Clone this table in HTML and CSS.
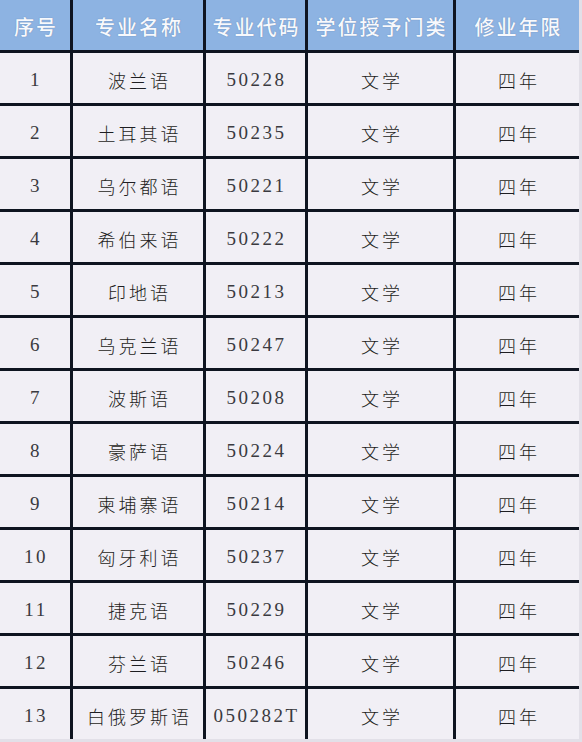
FILE: index.html
```html
<!DOCTYPE html>
<html lang="zh-CN">
<head>
<meta charset="utf-8">
<title>专业列表</title>
<link rel="stylesheet" href="styles.css">
</head>
<body>
<div class="sheet">
  <div class="grid">
    <div class="cell head">序号</div>
    <div class="cell head">专业名称</div>
    <div class="cell head">专业代码</div>
    <div class="cell head">学位授予门类</div>
    <div class="cell head">修业年限</div>

    <div class="cell num">1</div><div class="cell">波兰语</div><div class="cell num">50228</div><div class="cell">文学</div><div class="cell">四年</div>
    <div class="cell num">2</div><div class="cell">土耳其语</div><div class="cell num">50235</div><div class="cell">文学</div><div class="cell">四年</div>
    <div class="cell num">3</div><div class="cell">乌尔都语</div><div class="cell num">50221</div><div class="cell">文学</div><div class="cell">四年</div>
    <div class="cell num">4</div><div class="cell">希伯来语</div><div class="cell num">50222</div><div class="cell">文学</div><div class="cell">四年</div>
    <div class="cell num">5</div><div class="cell">印地语</div><div class="cell num">50213</div><div class="cell">文学</div><div class="cell">四年</div>
    <div class="cell num">6</div><div class="cell">乌克兰语</div><div class="cell num">50247</div><div class="cell">文学</div><div class="cell">四年</div>
    <div class="cell num">7</div><div class="cell">波斯语</div><div class="cell num">50208</div><div class="cell">文学</div><div class="cell">四年</div>
    <div class="cell num">8</div><div class="cell">豪萨语</div><div class="cell num">50224</div><div class="cell">文学</div><div class="cell">四年</div>
    <div class="cell num">9</div><div class="cell">柬埔寨语</div><div class="cell num">50214</div><div class="cell">文学</div><div class="cell">四年</div>
    <div class="cell num">10</div><div class="cell">匈牙利语</div><div class="cell num">50237</div><div class="cell">文学</div><div class="cell">四年</div>
    <div class="cell num">11</div><div class="cell">捷克语</div><div class="cell num">50229</div><div class="cell">文学</div><div class="cell">四年</div>
    <div class="cell num">12</div><div class="cell">芬兰语</div><div class="cell num">50246</div><div class="cell">文学</div><div class="cell">四年</div>
    <div class="cell num">13</div><div class="cell">白俄罗斯语</div><div class="cell num">050282T</div><div class="cell">文学</div><div class="cell">四年</div>
  </div>
</div>
</body>
</html>
```
FILE: styles.css
```css
html, body {
  margin: 0;
  padding: 0;
  background: #f1eff5;
}
.sheet {
  width: 582px;
  height: 742px;
  box-sizing: border-box;
  border-right: 3px solid #e2e0e8;
  border-bottom: 3px solid #e2e0e8;
  overflow: hidden;
}
.grid {
  display: grid;
  grid-template-columns: 70px 130px 99px 145px 123px;
  grid-auto-rows: 50px;
  gap: 3px;
  background: #0e1420;
  width: 579px;
}
.cell {
  background: #f1eff5;
  display: flex;
  align-items: center;
  justify-content: center;
  padding-top: 4px;
  padding-left: 3px;
  box-sizing: border-box;
  font-family: "Noto Sans CJK SC", sans-serif;
  font-weight: 300;
  font-size: 18px;
  letter-spacing: 3px;
  color: #1e1e22;
}
.cell.num {
  font-family: "Liberation Serif", serif;
  font-weight: 400;
  font-size: 19px;
  letter-spacing: 2.5px;
  padding-left: 2px;
  color: #3a3a40;
}
.cell.head {
  background: #8db3e2;
  color: #f7f9fd;
  font-size: 20px;
  font-weight: 500;
  letter-spacing: 2px;
  padding-top: 2px;
  padding-left: 2px;
  text-shadow: 0 0 1px rgba(70, 95, 140, 0.7);
}
```
